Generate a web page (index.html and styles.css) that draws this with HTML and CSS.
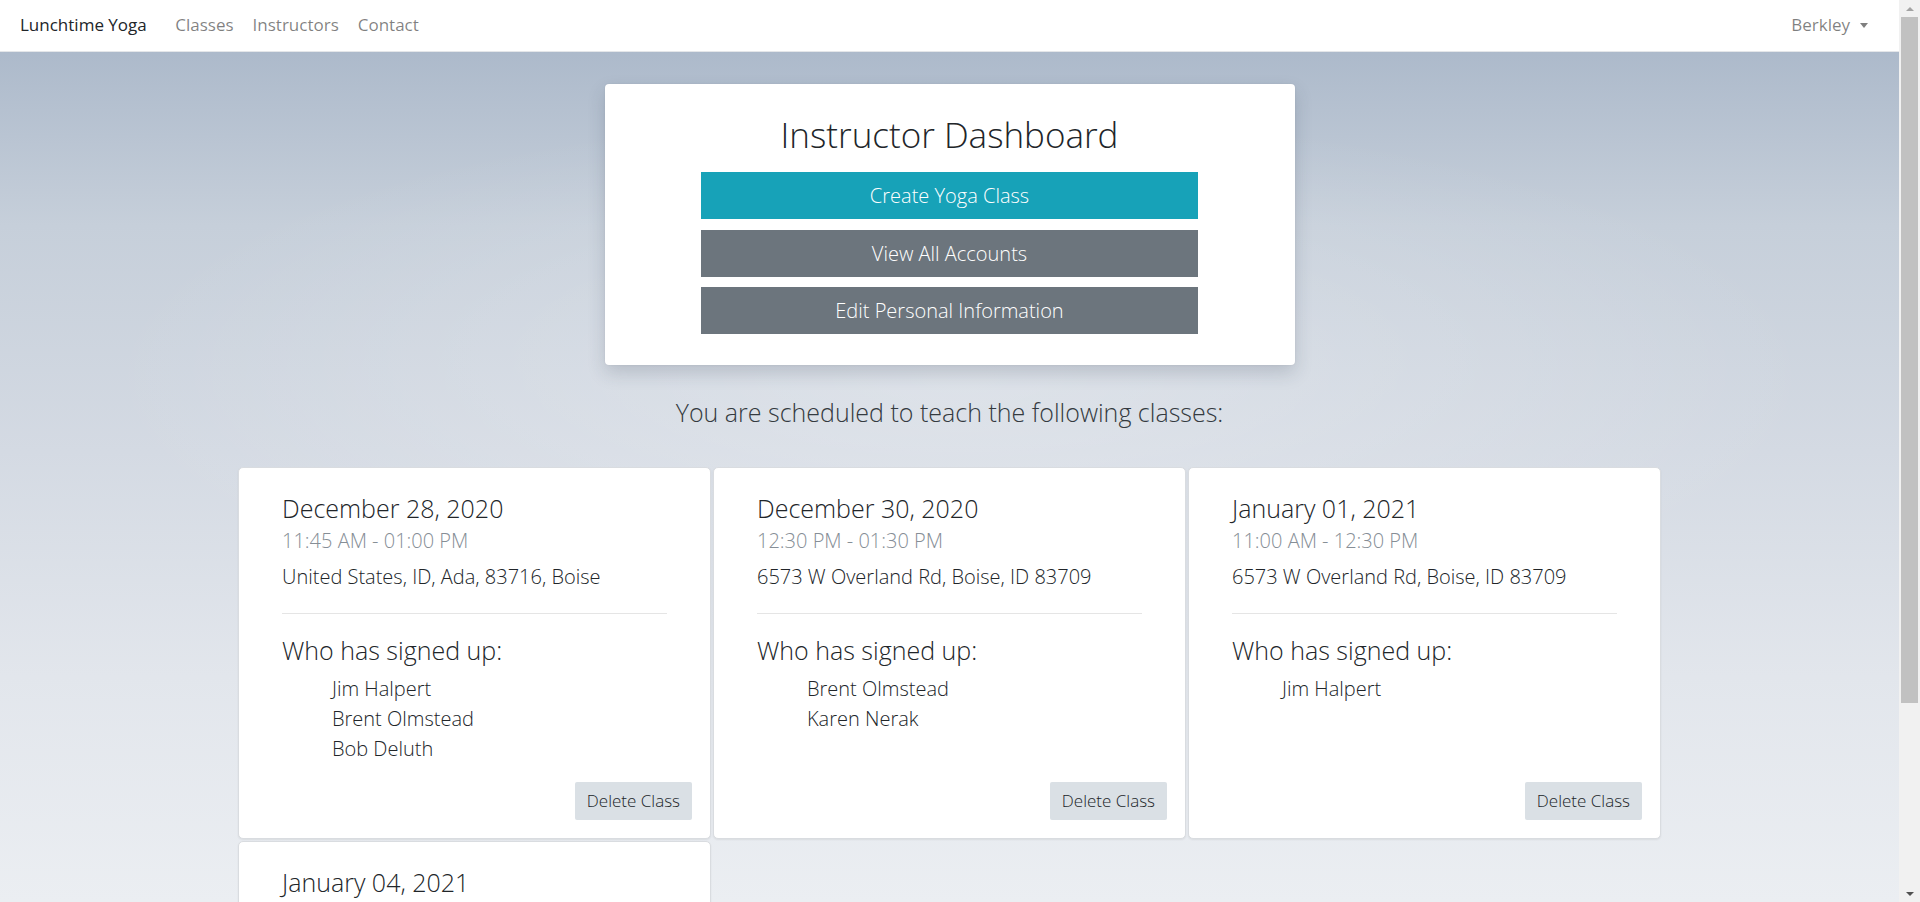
FILE: index.html
```html
<!DOCTYPE html>
<html lang="en">
<head>
<meta charset="utf-8">
<title>Lunchtime Yoga - Instructor Dashboard</title>
<link rel="stylesheet" href="styles.css">
</head>
<body>
<nav class="navbar">
  <a class="brand" href="#">Lunchtime Yoga</a>
  <ul class="nav-links">
    <li><a href="#">Classes</a></li>
    <li><a href="#">Instructors</a></li>
    <li><a href="#">Contact</a></li>
  </ul>
  <div class="user-menu">Berkley<span class="caret"></span></div>
</nav>

<main class="page">
  <section class="dash-card">
    <h1 class="dash-title">Instructor Dashboard</h1>
    <div class="dash-actions">
      <a class="btn btn-info" href="#">Create Yoga Class</a>
      <a class="btn btn-secondary" href="#">View All Accounts</a>
      <a class="btn btn-secondary" href="#">Edit Personal Information</a>
    </div>
  </section>

  <h2 class="schedule-title">You are scheduled to teach the following classes:</h2>

  <div class="class-grid">
    <article class="class-card">
      <div class="class-body">
        <h3 class="class-date">December 28, 2020</h3>
        <div class="class-time">11:45 AM - 01:00 PM</div>
        <p class="class-address">United States, ID, Ada, 83716, Boise</p>
        <hr class="divider">
        <h3 class="signup-title">Who has signed up:</h3>
        <ul class="names">
          <li>Jim Halpert</li>
          <li>Brent Olmstead</li>
          <li>Bob Deluth</li>
        </ul>
      </div>
      <div class="class-footer"><button class="btn-delete">Delete Class</button></div>
    </article>

    <article class="class-card">
      <div class="class-body">
        <h3 class="class-date">December 30, 2020</h3>
        <div class="class-time">12:30 PM - 01:30 PM</div>
        <p class="class-address">6573 W Overland Rd, Boise, ID 83709</p>
        <hr class="divider">
        <h3 class="signup-title">Who has signed up:</h3>
        <ul class="names">
          <li>Brent Olmstead</li>
          <li>Karen Nerak</li>
        </ul>
      </div>
      <div class="class-footer"><button class="btn-delete">Delete Class</button></div>
    </article>

    <article class="class-card">
      <div class="class-body">
        <h3 class="class-date">January 01, 2021</h3>
        <div class="class-time">11:00 AM - 12:30 PM</div>
        <p class="class-address">6573 W Overland Rd, Boise, ID 83709</p>
        <hr class="divider">
        <h3 class="signup-title">Who has signed up:</h3>
        <ul class="names">
          <li>Jim Halpert</li>
        </ul>
      </div>
      <div class="class-footer"><button class="btn-delete">Delete Class</button></div>
    </article>

    <article class="class-card">
      <div class="class-body">
        <h3 class="class-date">January 04, 2021</h3>
        <div class="class-time">12:00 PM - 01:00 PM</div>
        <p class="class-address">6573 W Overland Rd, Boise, ID 83709</p>
        <hr class="divider">
        <h3 class="signup-title">Who has signed up:</h3>
        <ul class="names">
          <li>Karen Nerak</li>
        </ul>
      </div>
      <div class="class-footer"><button class="btn-delete">Delete Class</button></div>
    </article>
  </div>
</main>

<div class="scrollbar" aria-hidden="true">
  <span class="sb-btn"><span class="sb-arrow-up"></span></span>
  <span class="sb-thumb"></span>
  <span class="sb-track"></span>
  <span class="sb-btn"><span class="sb-arrow-down"></span></span>
</div>
</body>
</html>
```

FILE: styles.css
```css
* {
  box-sizing: border-box;
}

html {
  min-height: 100%;
}

body {
  margin: 0;
  padding: 0 21px 40px 0;
  min-height: 100%;
  font-family: "Open Sans", "Liberation Sans", sans-serif;
  color: #212529;
  background-color: #dfe3e9;
  background-image:
    radial-gradient(ellipse 45% 30% at 50% 42%, rgba(255, 255, 255, 0.28), rgba(255, 255, 255, 0) 100%),
    linear-gradient(180deg, #abb8c9 0, #adbacb 6%, #c6cfda 25%, #d4dae3 50%, #e2e6ec 75%, #ebeef2 100%);
  background-attachment: fixed;
}

/* ---------- navbar ---------- */
.navbar {
  height: 52px;
  display: flex;
  align-items: center;
  padding: 0 31px 1px 20px;
  background: #fff;
  border-bottom: 1px solid #e4e6e9;
  font-size: 17px;
  line-height: 1.5;
}

.brand {
  color: #212529;
  text-decoration: none;
  margin-right: 19px;
}

.nav-links {
  display: flex;
  list-style: none;
  margin: 0;
  padding: 0;
}

.nav-links a {
  display: block;
  padding: 0 9.5px;
  color: rgba(0, 0, 0, 0.5);
  text-decoration: none;
}

.user-menu {
  margin-left: auto;
  display: flex;
  align-items: center;
  color: rgba(0, 0, 0, 0.5);
}

.caret {
  display: inline-block;
  width: 0;
  height: 0;
  margin-left: 10px;
  border-top: 5px solid rgba(0, 0, 0, 0.5);
  border-left: 4.5px solid transparent;
  border-right: 4.5px solid transparent;
}

/* ---------- page ---------- */
.page {
  display: flex;
  flex-direction: column;
  align-items: center;
  padding-top: 32px;
}

.dash-card {
  width: 690px;
  background: #fff;
  border-radius: 4px;
  box-shadow: 0 8px 18px rgba(40, 50, 70, 0.18), 0 0 2px rgba(0, 0, 0, 0.08);
  padding: 29px 0 31px;
  display: flex;
  flex-direction: column;
  align-items: center;
}

.dash-title {
  margin: 0 0 15px;
  font-size: 35px;
  line-height: 44px;
  font-weight: 300;
  color: #212529;
}

.dash-actions {
  width: 497px;
  display: flex;
  flex-direction: column;
  gap: 10.5px;
}

.btn {
  display: block;
  height: 47px;
  line-height: 47px;
  text-align: center;
  font-size: 20px;
  font-weight: 300;
  color: #fff;
  text-decoration: none;
}

.btn-info {
  background: #17a2b8;
}

.btn-secondary {
  background: #6c757d;
}

.schedule-title {
  margin: 33px 0 0;
  font-size: 25px;
  line-height: 29px;
  font-weight: 300;
  color: #343a40;
}

/* ---------- class cards ---------- */
.class-grid {
  margin-top: 40px;
  display: grid;
  grid-template-columns: repeat(3, 473px);
  gap: 2px;
}

.class-card {
  display: flex;
  flex-direction: column;
  background: #fff;
  border: 1px solid #d9dce0;
  border-radius: 5px;
  box-shadow: 0 1px 2px rgba(0, 0, 0, 0.07);
}

.class-body {
  padding: 24px 43px 0;
}

.class-date,
.signup-title {
  margin: 0;
  font-size: 25px;
  line-height: 32px;
  font-weight: 300;
  color: #212529;
}

.class-time {
  margin-top: 4.5px;
  font-size: 20px;
  line-height: 24px;
  font-weight: 300;
  color: #868e96;
}

.class-address {
  margin: 9.7px 0 0;
  font-size: 20px;
  line-height: 30px;
  font-weight: 300;
  color: #212529;
}

.divider {
  margin: 21px 0 20px;
  border: 0;
  border-top: 1px solid rgba(0, 0, 0, 0.1);
}

.names {
  list-style: none;
  margin: 8px 0 0;
  padding-left: 50px;
  font-size: 20px;
  line-height: 30px;
  font-weight: 300;
  color: #212529;
}

.class-footer {
  margin-top: auto;
  padding: 18px;
  display: flex;
  justify-content: flex-end;
}

.btn-delete {
  height: 38px;
  padding: 0 12px;
  border: 0;
  border-radius: 2px;
  background: #dae0e5;
  font-family: "Open Sans", "Liberation Sans", sans-serif;
  font-size: 17px;
  font-weight: 300;
  color: #212529;
  line-height: 38px;
  cursor: pointer;
}

/* ---------- window scrollbar (as in the screenshot) ---------- */
.scrollbar {
  position: fixed;
  top: 0;
  right: 0;
  width: 21px;
  height: 100vh;
  background: #f1f1f1;
  display: flex;
  flex-direction: column;
  align-items: stretch;
}

.sb-btn {
  height: 17px;
  display: flex;
  align-items: center;
  justify-content: center;
}

.sb-arrow-up {
  width: 0;
  height: 0;
  border-bottom: 4px solid #a3a3a3;
  border-left: 4px solid transparent;
  border-right: 4px solid transparent;
}

.sb-arrow-down {
  width: 0;
  height: 0;
  border-top: 4px solid #505050;
  border-left: 4px solid transparent;
  border-right: 4px solid transparent;
}

.sb-thumb {
  height: 686px;
  margin: 0 2px;
  background: #c1c1c1;
}

.sb-track {
  flex: 1;
}
```
